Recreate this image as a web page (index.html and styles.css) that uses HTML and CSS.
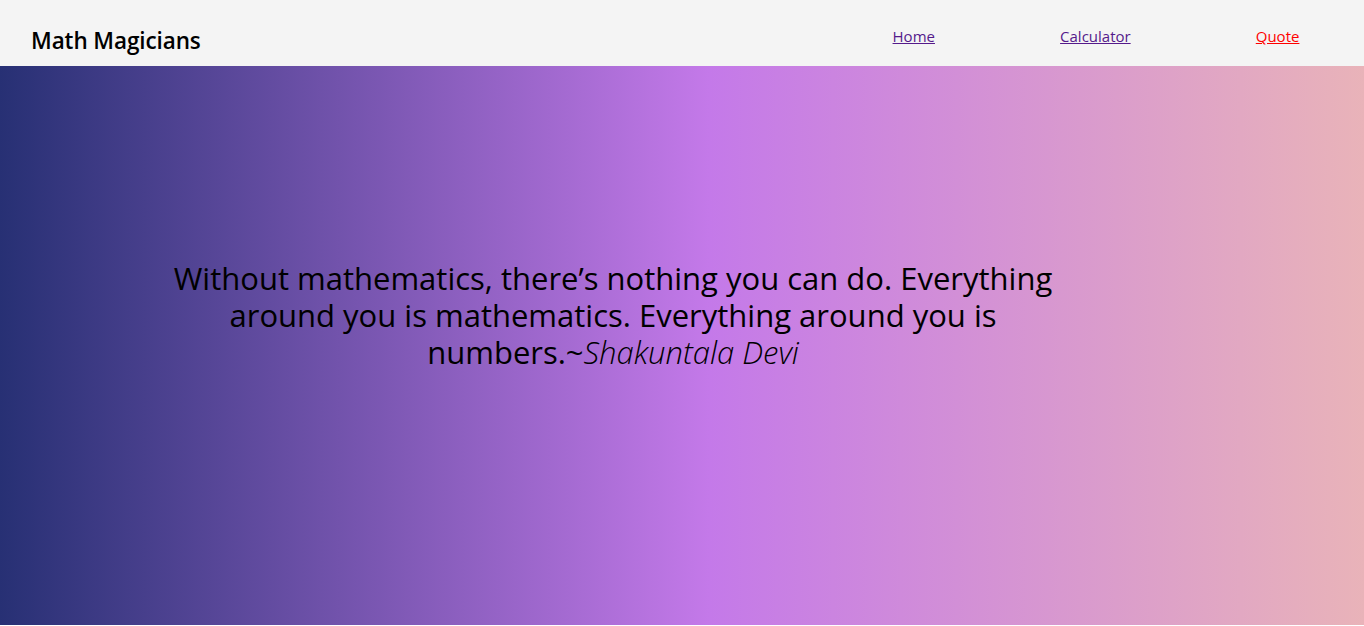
FILE: index.html
```html
<!DOCTYPE html>
<html lang="en">
<head>
<meta charset="utf-8">
<title>Math Magicians</title>
<link rel="stylesheet" href="styles.css">
</head>
<body>
<header class="topbar">
  <h1 class="logo">Math Magicians</h1>
  <nav class="nav">
    <a class="nav-link visited" href="#home">Home</a>
    <a class="nav-link visited" href="#calc">Calculator</a>
    <a class="nav-link active" href="#quote">Quote</a>
  </nav>
</header>
<main class="hero">
  <p class="quote">Without mathematics, there’s nothing you can do. Everything around you is mathematics. Everything around you is numbers.~<em>Shakuntala Devi</em></p>
</main>
</body>
</html>
```

FILE: styles.css
```css
html, body {
  margin: 0;
  padding: 0;
}
body {
  font-family: "Open Sans", "Noto Sans", sans-serif;
  background: #fff;
  height: 626px;
}
.topbar {
  height: 66px;
  background: #f4f4f4;
  display: flex;
  align-items: center;
  justify-content: space-between;
  padding: 0 2px 0 31px;
}
.logo {
  margin: 14px 0 0 0;
  font-size: 22.5px;
  font-weight: 600;
  color: #000;
  letter-spacing: -0.1px;
}
.nav {
  width: 532px;
  display: flex;
  justify-content: space-around;
  margin-top: 6px;
}
.nav-link {
  font-size: 15px;
  text-decoration: underline;
}
.nav-link.visited { color: #551a8b; }
.nav-link.active { color: #ff0000; }
.hero {
  height: 559px;
  background: linear-gradient(to right, #273074 0%, #c479e9 52%, #e9b3b9 100%);
  display: flex;
  align-items: center;
}
.quote {
  width: 920px;
  margin: 0 0 60px 153px;
  text-align: center;
  font-size: 31px;
  line-height: 37px;
  color: #000;
}
.quote em {
  font-style: italic;
  font-weight: 300;
}
```
